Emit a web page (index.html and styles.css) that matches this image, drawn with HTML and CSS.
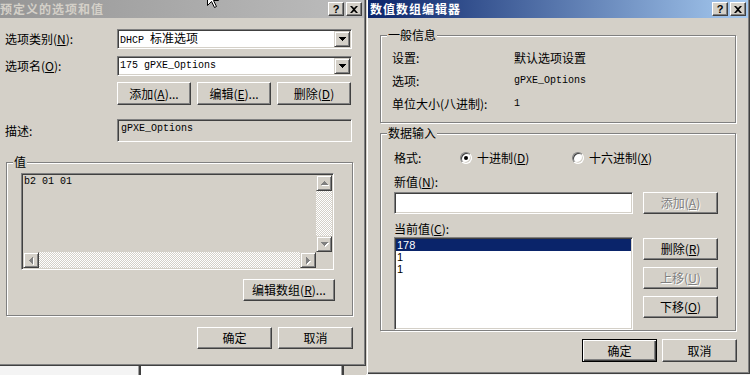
FILE: index.html
```html
<!DOCTYPE html>
<html lang="zh-CN">

<head>
    <meta charset="UTF-8">
    <title>数值数组编辑器</title>
    <link rel="stylesheet" href="styles.css">
</head>

<body>
    <div class="screen">

        <div class="left-col">
            <div class="dialog dialog-left">
                <div class="titlebar inactive">
                    <span class="title">预定义的选项和值</span>
                    <div class="caption-btns">
                        <span class="cbtn">?</span>
                        <span class="cbtn">
                            <svg width="8" height="7" viewBox="0 0 8 7"><path d="M0 0h2l2 2 2-2h2L5 3.5 8 7H6L4 5 2 7H0l3-3.5z" fill="#000"/></svg>
                        </span>
                    </div>
                </div>

                <div class="body-left">
                    <div class="form-row">
                        <span class="label">选项类别(<u>N</u>):</span>
                        <div class="combo sunken">
                            <span class="value"><span class="mono">DHCP </span>标准选项</span>
                            <span class="drop-btn"><svg width="7" height="4" viewBox="0 0 7 4"><path d="M0 0h7v1H6v1H5v1H4v1H3V3H2V2H1V1H0z" fill="#000"/></svg></span>
                        </div>
                    </div>
                    <div class="form-row">
                        <span class="label">选项名(<u>O</u>):</span>
                        <div class="combo sunken">
                            <span class="value mono">175 gPXE_Options</span>
                            <span class="drop-btn"><svg width="7" height="4" viewBox="0 0 7 4"><path d="M0 0h7v1H6v1H5v1H4v1H3V3H2V2H1V1H0z" fill="#000"/></svg></span>
                        </div>
                    </div>

                    <div class="btn-row top-btns">
                        <button class="btn">添加(<u>A</u>)...</button>
                        <button class="btn">编辑(<u>E</u>)...</button>
                        <button class="btn">删除(<u>D</u>)</button>
                    </div>

                    <div class="desc-row">
                        <span class="label">描述:</span>
                        <div class="readonly sunken mono">gPXE_Options</div>
                    </div>

                    <div class="group value-group">
                        <div class="group-title">值</div>
                        <div class="edit-area sunken">
                            <div class="edit-text mono">b2 01 01</div>
                            <div class="vscroll">
                                <span class="sbtn"><svg width="7" height="4" viewBox="0 0 7 4"><path d="M3 0h1v1h1v1h1v1h1v1H0V3h1V2h1V1h1z" fill="#808080"/></svg></span>
                                <span class="track"></span>
                                <span class="sbtn"><svg width="7" height="4" viewBox="0 0 7 4"><path d="M0 0h7v1H6v1H5v1H4v1H3V3H2V2H1V1H0z" fill="#808080"/></svg></span>
                            </div>
                            <div class="hscroll">
                                <span class="sbtn"><svg width="4" height="7" viewBox="0 0 4 7"><path d="M3 0h1v7H3V6H2V5H1V4H0V3h1V2h1V1h1z" fill="#808080"/></svg></span>
                                <span class="track"></span>
                                <span class="sbtn"><svg width="4" height="7" viewBox="0 0 4 7"><path d="M0 0h1v1h1v1h1v1h1v1H3v1H2v1H1v1H0z" fill="#808080"/></svg></span>
                            </div>
                            <div class="corner"></div>
                        </div>
                        <button class="btn wide">编辑数组(<u>R</u>)...</button>
                    </div>

                    <div class="btn-row footer-left">
                        <button class="btn">确定</button>
                        <button class="btn">取消</button>
                    </div>
                </div>
            </div>

            <div class="behind">
                <span class="pane pane-a"></span>
                <span class="split"></span>
                <span class="pane pane-b"></span>
                <span class="split"></span>
                <span class="pane pane-c"></span>
            </div>
        </div>

        <div class="dialog dialog-right">
            <div class="titlebar active">
                <span class="title">数值数组编辑器</span>
                <div class="caption-btns">
                    <span class="cbtn">?</span>
                    <span class="cbtn">
                        <svg width="8" height="7" viewBox="0 0 8 7"><path d="M0 0h2l2 2 2-2h2L5 3.5 8 7H6L4 5 2 7H0l3-3.5z" fill="#000"/></svg>
                    </span>
                </div>
            </div>

            <div class="body-right">
                <div class="group info-group">
                    <div class="group-title">一般信息</div>
                    <div class="info-row first">
                        <span class="key">设置:</span>
                        <span>默认选项设置</span>
                    </div>
                    <div class="info-row">
                        <span class="key">选项:</span>
                        <span class="mono">gPXE_Options</span>
                    </div>
                    <div class="info-row">
                        <span class="key">单位大小(八进制):</span>
                        <span class="mono">1</span>
                    </div>
                </div>

                <div class="group data-group">
                    <div class="group-title">数据输入</div>
                    <div class="format-row">
                        <span class="key">格式:</span>
                        <label class="radio-opt">
                            <span class="radio checked"></span>
                            <span>十进制(<u>D</u>)</span>
                        </label>
                        <label class="radio-opt">
                            <span class="radio"></span>
                            <span>十六进制(<u>X</u>)</span>
                        </label>
                    </div>
                    <div class="field-label new-label">新值(<u>N</u>):</div>
                    <div class="input-row">
                        <div class="text-input sunken"></div>
                        <button class="btn disabled">添加(<u>A</u>)</button>
                    </div>
                    <div class="field-label cur-label">当前值(<u>C</u>):</div>
                    <div class="list-row">
                        <div class="listbox sunken">
                            <div class="item selected">178</div>
                            <div class="item">1</div>
                            <div class="item">1</div>
                        </div>
                        <div class="side-btns">
                            <button class="btn">删除(<u>R</u>)</button>
                            <button class="btn disabled">上移(<u>U</u>)</button>
                            <button class="btn">下移(<u>O</u>)</button>
                        </div>
                    </div>
                </div>

                <div class="btn-row footer-right">
                    <button class="btn default">确定</button>
                    <button class="btn">取消</button>
                </div>
            </div>
        </div>

        <svg class="cursor" width="13" height="20" viewBox="0 0 13 20">
            <path d="M0.5 0.5V16.5L4.5 12.5L7.5 18.5L9.5 17.5L6.5 11.5H11.5Z" fill="#fff" stroke="#000"/>
        </svg>
    </div>
</body>

</html>
```

FILE: styles.css
```css
* {
    box-sizing: border-box;
}

body {
    margin: 0;
    width: 750px;
    height: 375px;
    overflow: hidden;
    background: #f4f4f4;
    font-family: "Noto Sans CJK SC", "Noto Sans", sans-serif;
    font-size: 12px;
    line-height: 14px;
    color: #000;
}

u {
    text-decoration: underline;
    text-underline-offset: 1px;
}

.mono {
    font-family: "Liberation Mono", "Noto Sans CJK SC", monospace;
    font-size: 10px;
}

.screen {
    position: relative;
    display: flex;
    width: 750px;
    height: 375px;
}

/* windows */

.left-col {
    width: 366px;
    display: flex;
    flex-direction: column;
}

.dialog {
    background: #d4d0c8;
    display: flex;
    flex-direction: column;
}

.dialog-left {
    height: 366px;
    padding: 0 2px 2px 0;
    box-shadow: inset -1px -1px #404040, inset -2px -2px #808080;
}

.dialog-right {
    width: 384px;
    height: 374px;
    padding: 0 2px 2px 2px;
    box-shadow: inset 1px 0 #d4d0c8, inset 2px 0 #fff, inset -1px -1px #404040, inset -2px -2px #808080;
}

.titlebar {
    height: 18px;
    flex-shrink: 0;
    display: flex;
    align-items: center;
    justify-content: space-between;
    padding-right: 2px;
    overflow: hidden;
}

.titlebar.inactive {
    background: linear-gradient(to right, #969696, #bdbdbd);
    color: #d4d0c8;
}

.titlebar.active {
    background: linear-gradient(to right, #0a246a, #a6caf0);
    color: #fff;
}

.title {
    font-weight: bold;
    letter-spacing: 1px;
    white-space: nowrap;
}

.inactive .title {
    margin-left: 0;
}

.active .title {
    margin-left: 2px;
}

.caption-btns {
    display: flex;
    gap: 2px;
}

.cbtn {
    width: 16px;
    height: 14px;
    display: flex;
    align-items: center;
    justify-content: center;
    background: #d4d0c8;
    border: 1px solid;
    border-color: #fff #404040 #404040 #fff;
    box-shadow: inset -1px -1px #808080;
    font: bold 11px/1 "Liberation Sans", sans-serif;
    color: #000;
}

/* controls */

.btn {
    font: inherit;
    line-height: 14px;
    padding: 0;
    color: #000;
    background: #d4d0c8;
    width: 75px;
    height: 22px;
    display: flex;
    align-items: center;
    justify-content: center;
    border: 1px solid;
    border-color: #fff #404040 #404040 #fff;
    box-shadow: inset -1px -1px #808080;
    white-space: nowrap;
}

.btn.disabled {
    color: #808080;
    text-shadow: 1px 1px #fff;
}

.btn.default {
    border-color: #000;
    box-shadow: inset 1px 1px #fff, inset -1px -1px #404040, inset -2px -2px #808080;
}

.sunken {
    border: 1px solid;
    border-color: #808080 #fff #fff #808080;
    box-shadow: inset 1px 1px #404040, inset -1px -1px #d4d0c8;
}

.group {
    border: 1px solid #808080;
    box-shadow: inset 1px 1px #fff, 1px 1px #fff;
    display: flex;
    flex-direction: column;
}

.group-title {
    align-self: flex-start;
    margin: -8px 0 0 6px;
    padding: 0 1px;
    background: #d4d0c8;
    line-height: 14px;
}

.btn-row {
    display: flex;
}

/* left dialog */

.body-left {
    display: flex;
    flex-direction: column;
    padding-top: 11px;
}

.form-row {
    display: flex;
    align-items: center;
    height: 20px;
}

.form-row + .form-row {
    margin-top: 7px;
}

.label {
    width: 117px;
    padding-left: 5px;
    flex-shrink: 0;
    white-space: nowrap;
}

.combo {
    width: 235px;
    height: 20px;
    background: #fff;
    display: flex;
    align-items: center;
    justify-content: space-between;
    padding: 1px 1px 1px 2px;
}

.combo .value {
    white-space: nowrap;
}

.drop-btn {
    width: 16px;
    height: 16px;
    display: flex;
    align-items: center;
    justify-content: center;
    background: #d4d0c8;
    border: 1px solid;
    border-color: #d4d0c8 #404040 #404040 #d4d0c8;
    box-shadow: inset 1px 1px #fff, inset -1px -1px #808080;
}

.top-btns {
    margin-top: 6px;
    padding-left: 117px;
    gap: 6px;
}

.top-btns .btn {
    width: 74px;
    height: 23px;
}

.desc-row {
    display: flex;
    align-items: center;
    height: 23px;
    margin-top: 14px;
}

.readonly {
    width: 235px;
    height: 23px;
    padding: 2px 3px;
    background: #d4d0c8;
}

.value-group {
    margin: 20px 0 0 6px;
    width: 347px;
    height: 154px;
}

.edit-area {
    margin: 4px 0 0 14px;
    width: 313px;
    height: 97px;
    padding: 1px;
    background: #d4d0c8;
    display: grid;
    grid-template-columns: 1fr 16px;
    grid-template-rows: 1fr 16px;
}

.edit-text {
    padding-left: 1px;
}

.vscroll {
    display: flex;
    flex-direction: column;
}

.hscroll {
    display: flex;
}

.sbtn {
    width: 16px;
    height: 16px;
    flex-shrink: 0;
    display: flex;
    align-items: center;
    justify-content: center;
    background: #d4d0c8;
    border: 1px solid;
    border-color: #d4d0c8 #404040 #404040 #d4d0c8;
    box-shadow: inset 1px 1px #fff, inset -1px -1px #808080;
}

.sbtn svg {
    filter: drop-shadow(1px 1px 0 #fff);
}

.track {
    flex: 1;
    background: repeating-conic-gradient(#fff 0 25%, #d4d0c8 0 50%) 0 0 / 2px 2px;
}

.corner {
    background: #d4d0c8;
}

.btn.wide {
    width: 92px;
    align-self: flex-end;
    margin: 9px 17px 0 0;
}

.footer-left {
    margin-top: 11px;
    padding-left: 197px;
    gap: 6px;
}

/* strip of the window behind */

.behind {
    display: flex;
    height: 9px;
}

.pane-a {
    width: 138px;
    background: #f4f4f4;
}

.split {
    width: 3px;
    border-left: 1px solid #a0a0a0;
    background: #404040;
}

.pane-b {
    width: 200px;
    background: #fff;
}

.pane-c {
    flex: 1;
    background: #d4d0c8;
}

/* right dialog */

.body-right {
    display: flex;
    flex-direction: column;
    padding-top: 17px;
}

.info-group {
    margin-left: 12px;
    width: 356px;
    height: 88px;
}

.info-row {
    display: flex;
    align-items: center;
    height: 23px;
    padding-left: 11px;
    white-space: nowrap;
}

.info-row.first {
    margin-top: 4px;
}

.info-row .key {
    width: 122px;
}

.data-group {
    margin: 10px 0 0 12px;
    width: 356px;
    height: 198px;
}

.format-row {
    display: flex;
    align-items: center;
    height: 20px;
    margin-top: 8px;
    padding-left: 13px;
}

.format-row .key {
    width: 66px;
}

.radio-opt {
    display: flex;
    align-items: center;
    gap: 5px;
    width: 112px;
    white-space: nowrap;
}

.radio {
    width: 12px;
    height: 12px;
    border-radius: 50%;
    background: #fff;
    border: 1px solid;
    border-color: #808080 #fff #fff #808080;
    box-shadow: inset 1px 1px #404040, inset -1px -1px #d4d0c8;
    display: flex;
    align-items: center;
    justify-content: center;
}

.radio.checked::after {
    content: "";
    width: 4px;
    height: 4px;
    border-radius: 50%;
    background: #000;
}

.field-label {
    padding-left: 13px;
    display: flex;
    align-items: center;
}

.new-label {
    height: 20px;
    margin-top: 4px;
}

.cur-label {
    height: 16px;
    margin-top: 7px;
}

.input-row {
    display: flex;
    gap: 10px;
    padding-left: 13px;
}

.text-input {
    width: 239px;
    height: 22px;
    background: #fff;
}

.list-row {
    display: flex;
    gap: 10px;
    padding-left: 13px;
}

.listbox {
    width: 239px;
    height: 93px;
    padding: 1px;
    background: #fff;
}

.item {
    height: 12px;
    line-height: 12px;
    padding-left: 1px;
    font-family: "Liberation Sans", sans-serif;
    font-size: 11px;
}

.item.selected {
    background: #0a246a;
    color: #fff;
}

.side-btns {
    display: flex;
    flex-direction: column;
    gap: 7px;
    margin-top: 1px;
}

.footer-right {
    margin-top: 8px;
    padding-left: 214px;
    gap: 5px;
}

.footer-right .btn {
    height: 23px;
}

.cursor {
    position: absolute;
    left: 207px;
    top: -11px;
}
```
